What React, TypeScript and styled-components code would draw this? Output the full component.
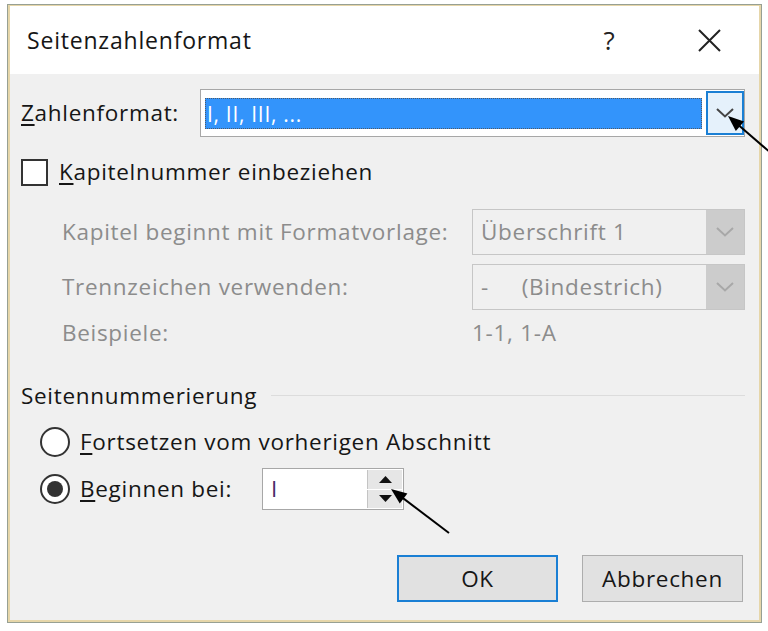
import React from "react"
import styled, { createGlobalStyle } from "styled-components"

const GlobalStyle = createGlobalStyle`
  html, body {
    margin: 0;
    padding: 0;
    background: #ffffff;
  }
  body {
    font-family: "Open Sans", "Noto Sans", sans-serif;
    width: 768px;
    height: 631px;
    overflow: hidden;
    position: relative;
  }
`

const Frame = styled.div`
  margin: 4px 0 0 7px;
  width: 755px;
  height: 619px;
  box-sizing: border-box;
  border: 1px solid #97a093;
  background: #e6d6a9;
  padding: 1px 2px 2px 2px;
`

const Dialog = styled.div`
  height: 100%;
  display: flex;
  flex-direction: column;
  background: #f0f0f0;
  color: #161616;
  font-size: 22.5px;
  line-height: 28px;
  letter-spacing: 0.7px;
`

const TitleBar = styled.div`
  height: 68px;
  background: #ffffff;
  display: flex;
  align-items: center;
  padding: 0 27px 0 17px;
`

const Title = styled.div`
  flex: 1;
  font-size: 23px;
  letter-spacing: 0.8px;
  color: #161616;
`

const HelpButton = styled.div`
  width: 30px;
  text-align: center;
  font-size: 26px;
  letter-spacing: 0;
  color: #222;
  margin-right: 62px;
`

const CloseButton = styled.div`
  width: 46px;
  display: flex;
  justify-content: center;
  align-items: center;
`

const Body = styled.div`
  flex: 1;
  display: flex;
  flex-direction: column;
  padding: 15px 14px 0 11px;
`

const Row = styled.div<{ $mt?: number }>`
  display: flex;
  align-items: center;
  margin-top: ${(p) => p.$mt ?? 0}px;
`

const Label = styled.div<{ $w?: number; $disabled?: boolean }>`
  width: ${(p) => (p.$w ? `${p.$w}px` : "auto")};
  flex-shrink: 0;
  white-space: nowrap;
  color: ${(p) => (p.$disabled ? "#8c8c8c" : "#161616")};
`

const Key = styled.span`
  text-decoration: underline;
  text-underline-offset: 3px;
`

const Select = styled.div<{ $h: number; $disabled?: boolean }>`
  flex: 1;
  height: ${(p) => p.$h}px;
  box-sizing: border-box;
  display: flex;
  align-items: stretch;
  background: ${(p) => (p.$disabled ? "#f0f0f0" : "#ffffff")};
  border: 1px solid ${(p) => (p.$disabled ? "#c6c6c6" : "#a7a7a7")};
`

const SelectValue = styled.div<{ $disabled?: boolean }>`
  flex: 1;
  display: flex;
  align-items: center;
  padding-left: 8px;
  color: ${(p) => (p.$disabled ? "#8c8c8c" : "#161616")};
  white-space: pre;
`

const Highlight = styled.div`
  flex: 1;
  margin: 8px 4px 7px 4px;
  background: #3394fb;
  color: #ffffff;
  outline: 1px dotted #505a66;
  outline-offset: -1px;
  display: flex;
  align-items: center;
  padding-left: 2px;
  font-size: 21px;
`

const DropButton = styled.div<{ $active?: boolean }>`
  width: 38px;
  box-sizing: border-box;
  display: flex;
  align-items: center;
  justify-content: center;
  background: ${(p) => (p.$active ? "#e5f1fb" : "#cccccc")};
  border: ${(p) => (p.$active ? "2px solid #1a7fd4" : "1px solid #cccccc")};
  margin: ${(p) => (p.$active ? "1px 0 1px 0" : "0")};
`

const CheckBox = styled.div`
  width: 27px;
  height: 27px;
  box-sizing: border-box;
  border: 2px solid #333333;
  background: #ffffff;
  margin-right: 11px;
`

const OptionsGrid = styled.div`
  display: grid;
  grid-template-columns: 410px 1fr;
  row-gap: 9px;
  margin: 23px 0 0 41px;
  align-items: center;
`

const Example = styled.div`
  height: 28px;
  display: flex;
  align-items: center;
  color: #8c8c8c;
`

const Section = styled.div`
  display: flex;
  align-items: center;
  margin-top: 35px;
  gap: 14px;
`

const SectionLine = styled.div`
  flex: 1;
  height: 1px;
  background: #dcdcdc;
  margin-top: -2px;
`

const Radio = styled.div<{ $checked?: boolean }>`
  width: 30px;
  height: 30px;
  box-sizing: border-box;
  border-radius: 50%;
  border: 2px solid #333333;
  background: #ffffff;
  display: flex;
  align-items: center;
  justify-content: center;
  margin-right: 10px;
  &::after {
    content: "";
    display: ${(p) => (p.$checked ? "block" : "none")};
    width: 16px;
    height: 16px;
    border-radius: 50%;
    background: #333333;
  }
`

const RadioRow = styled(Row)`
  padding-left: 19px;
`

const Spin = styled.div`
  margin-left: 30px;
  width: 142px;
  height: 42px;
  box-sizing: border-box;
  border: 1px solid #a7a7a7;
  background: #ffffff;
  display: flex;
`

const SpinValue = styled.div`
  flex: 1;
  display: flex;
  align-items: center;
  padding-left: 8px;
  color: #4a2a6a;
`

const SpinButtons = styled.div`
  width: 35px;
  display: flex;
  flex-direction: column;
  margin: 1px 1px 1px 0;
  gap: 1px;
`

const SpinButton = styled.div`
  flex: 1;
  background: #e6e6e6;
  border-left: 1px solid #c4c4c4;
  display: flex;
  align-items: center;
  justify-content: center;
`

const Footer = styled.div`
  display: flex;
  justify-content: flex-end;
  gap: 24px;
  margin-top: 45px;
  padding-right: 2px;
`

const Button = styled.div<{ $default?: boolean }>`
  width: 161px;
  height: 47px;
  box-sizing: border-box;
  background: #e1e1e1;
  border: ${(p) => (p.$default ? "2px solid #1a7fd4" : "1px solid #adadad")};
  display: flex;
  align-items: center;
  justify-content: center;
  color: #161616;
`

const Annotations = styled.svg`
  position: absolute;
  left: 0;
  top: 0;
  pointer-events: none;
`

const Chevron: React.FC<{ color: string }> = ({ color }) => (
  <svg width="18" height="10" viewBox="0 0 18 10">
    <polyline points="1,1 9,8.5 17,1" fill="none" stroke={color} strokeWidth="2" />
  </svg>
)

const Triangle: React.FC<{ up?: boolean }> = ({ up }) => (
  <svg width="13" height="7" viewBox="0 0 13 7">
    <polygon points={up ? "0,7 6.5,0 13,7" : "0,0 6.5,7 13,0"} fill="#111" />
  </svg>
)

const Arrow: React.FC<{ x1: number; y1: number; x2: number; y2: number }> = ({ x1, y1, x2, y2 }) => {
  const a = Math.atan2(y2 - y1, x2 - x1)
  const len = 17
  const spread = 0.38
  const p1 = [x2 - len * Math.cos(a - spread), y2 - len * Math.sin(a - spread)]
  const p2 = [x2 - len * Math.cos(a + spread), y2 - len * Math.sin(a + spread)]
  return (
    <g>
      <line x1={x1} y1={y1} x2={x2 - 8 * Math.cos(a)} y2={y2 - 8 * Math.sin(a)} stroke="#000" strokeWidth="2" />
      <polygon points={`${x2},${y2} ${p1[0]},${p1[1]} ${p2[0]},${p2[1]}`} fill="#000" />
    </g>
  )
}

const App: React.FC = () => {
  return (
    <>
      <GlobalStyle />
      <Frame>
        <Dialog>
          <TitleBar>
            <Title>Seitenzahlenformat</Title>
            <HelpButton>?</HelpButton>
            <CloseButton>
              <svg width="23" height="23" viewBox="0 0 23 23">
                <path d="M1 1 L22 22 M22 1 L1 22" stroke="#222" strokeWidth="2" />
              </svg>
            </CloseButton>
          </TitleBar>
          <Body>
            <Row>
              <Label $w={179}>
                <Key>Z</Key>ahlenformat:
              </Label>
              <Select $h={48}>
                <Highlight>I, II, III, ...</Highlight>
                <DropButton $active>
                  <Chevron color="#444" />
                </DropButton>
              </Select>
            </Row>
            <Row $mt={21}>
              <CheckBox />
              <Label>
                <Key>K</Key>apitelnummer einbeziehen
              </Label>
            </Row>
            <OptionsGrid>
              <Label $disabled>Kapitel beginnt mit Formatvorlage:</Label>
              <Select $h={46} $disabled>
                <SelectValue $disabled>Überschrift 1</SelectValue>
                <DropButton>
                  <Chevron color="#a8a8a8" />
                </DropButton>
              </Select>
              <Label $disabled>Trennzeichen verwenden:</Label>
              <Select $h={46} $disabled>
                <SelectValue $disabled>{"-     (Bindestrich)"}</SelectValue>
                <DropButton>
                  <Chevron color="#a8a8a8" />
                </DropButton>
              </Select>
              <Label $disabled>Beispiele:</Label>
              <Example>1-1, 1-A</Example>
            </OptionsGrid>
            <Section>
              <Label>Seitennummerierung</Label>
              <SectionLine />
            </Section>
            <RadioRow $mt={17}>
              <Radio />
              <Label>
                <Key>F</Key>ortsetzen vom vorherigen Abschnitt
              </Label>
            </RadioRow>
            <RadioRow $mt={11}>
              <Radio $checked />
              <Label>
                <Key>B</Key>eginnen bei:
              </Label>
              <Spin>
                <SpinValue>I</SpinValue>
                <SpinButtons>
                  <SpinButton>
                    <Triangle up />
                  </SpinButton>
                  <SpinButton>
                    <Triangle />
                  </SpinButton>
                </SpinButtons>
              </Spin>
            </RadioRow>
            <Footer>
              <Button $default>OK</Button>
              <Button>Abbrechen</Button>
            </Footer>
          </Body>
        </Dialog>
      </Frame>
      <Annotations width="768" height="631" viewBox="0 0 768 631">
        <Arrow x1={772} y1={154} x2={728} y2={116} />
        <Arrow x1={449} y1={533} x2={391} y2={489} />
      </Annotations>
    </>
  )
}

export default App
